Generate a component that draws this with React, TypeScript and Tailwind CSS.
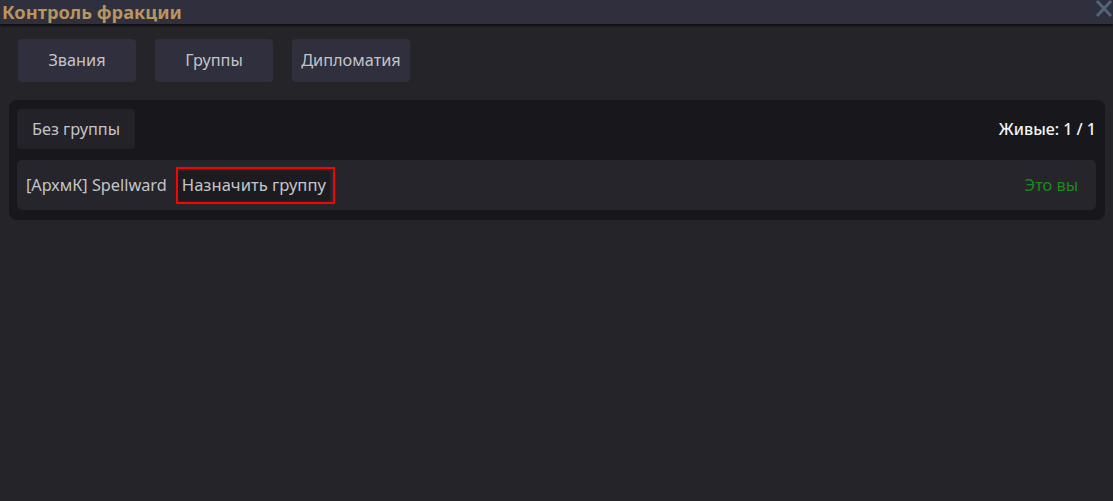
import React from "react";

export default function App() {
  return (
    <div className="w-[1113px] h-[501px] bg-[#252429] flex flex-col overflow-hidden" style={{ fontFamily: '"Noto Sans", "Open Sans", sans-serif' }}>
      <div className="h-[24px] bg-[#2f2f3d] flex items-center justify-between shadow-[0_2px_2px_rgba(0,0,0,0.6)] relative z-10 shrink-0">
        <div className="pl-[2px] text-[18.3px] font-bold text-[#b8955f] leading-none">Контроль фракции</div>
        <svg width="19" height="21" viewBox="0 0 19 21" className="self-start">
          <path d="M3 1 L17 16 M17 1 L3 16" stroke="#4f6479" strokeWidth="3" fill="none" />
        </svg>
      </div>
      <div className="flex gap-[19px] pl-[18px] pt-[15px]">
        {["Звания", "Группы", "Дипломатия"].map((t) => (
          <div key={t} className="w-[118px] h-[43px] bg-[#2f2f3d] rounded-[4px] flex items-center justify-center text-[16.3px] text-[#c4c4c8]">
            {t}
          </div>
        ))}
      </div>
      <div className="mt-[18px] ml-[9px] mr-[8px] bg-[#18171c] rounded-[8px] pt-[9px] pb-[10px] pl-[8px] pr-[9px]">
        <div className="flex items-center justify-between">
          <div className="w-[118px] h-[40px] bg-[#232228] rounded-[4px] flex items-center justify-center text-[16.3px] text-[#c4c4c8]">Без группы</div>
          <div className="text-[16px] text-[#f4f4f4] font-medium">Живые: 1 / 1</div>
        </div>
        <div className="mt-[11px] h-[50px] bg-[#26252b] rounded-[5px] flex items-center pl-[9px] pr-[18px]">
          <span className="text-[16.3px] text-[#c4c4c8]">[АрхмК] Spellward</span>
          <div className="ml-[9px] border-2 border-[#ff0000] pt-[2px] pb-[1px] pl-0 pr-[3px]">
            <div className="h-[30px] bg-[#1c1b20] rounded-[3px] flex items-center px-[4px] text-[16.6px] text-[#c4c4c8]">Назначить группу</div>
          </div>
          <span className="ml-auto text-[16.3px] text-[#1d8a1d]">Это вы</span>
        </div>
      </div>
    </div>
  );
}
